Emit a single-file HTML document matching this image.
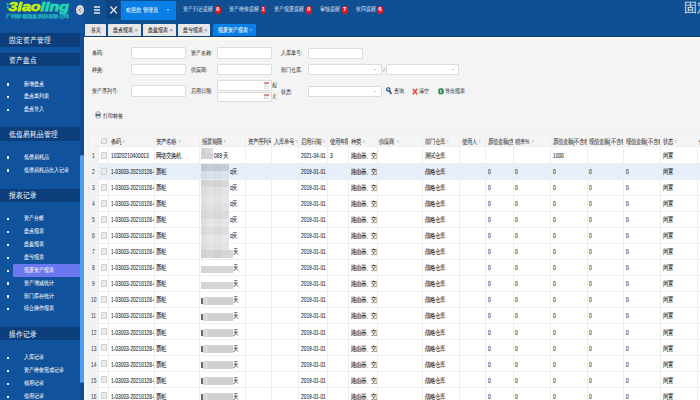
<!DOCTYPE html><html><head><meta charset="utf-8"><style>

*{margin:0;padding:0;box-sizing:border-box}
html,body{width:700px;height:400px;overflow:hidden;background:#f4f4f4;font-family:"Liberation Sans",sans-serif}
body *{-webkit-text-stroke:0.05px currentColor}
.a{position:absolute;white-space:nowrap}
.s{display:inline-block;transform:scaleY(1.2);transform-origin:50% 55%}
.c{display:inline-block;transform:scaleY(1.3);transform-origin:50% 55%}
.d{display:inline-block;transform:scale(0.97,1.45);transform-origin:0 55%}
#hdr{position:absolute;left:84px;top:0;width:616px;height:37px;background:#0f4f92}
#hdrline{position:absolute;left:84px;top:36px;width:616px;height:1px;background:#0c3f7a}
#side{position:absolute;left:0;top:0;width:84px;height:400px;background:#11529c}
.band{position:absolute;left:0;width:80px;height:13.3px;background:#0c3e7c;color:#e8eef6;font-size:6.5px;line-height:13.3px;padding-left:9.3px}
.band .s{position:relative;top:0.9px}
.item{position:absolute;left:0;width:80px;height:13px;color:#eef2f8;-webkit-text-stroke:0.12px #eef2f8;font-size:5px;line-height:13px;padding-left:23.5px}
.item:before{content:"";position:absolute;left:7px;top:5.7px;width:2px;height:2.4px;background:#e6ecf4}
.item.act{background:linear-gradient(to right,transparent 12.8px,#6b77ef 12.8px)}
#content{position:absolute;left:84px;top:37px;width:616px;height:363px;background:#f4f4f4;border-top:1px solid #fff}
#cream{position:absolute;left:84px;top:38px;width:616px;height:1.6px;background:#fcf9ef}
.lbl{position:absolute;font-size:5px;color:#3a3a3a;line-height:8px;transform:scaleY(1.2)}
.inp{position:absolute;background:#fff;border:0.6px solid #dcdcdc;border-radius:1px}
.sel:after{content:"";position:absolute;right:4.6px;top:4.7px;border-left:1.6px solid transparent;border-right:1.6px solid transparent;border-top:1.8px solid #999}
.tab{position:absolute;top:23.7px;height:12px;background:#e8e8e8;color:#222;-webkit-text-stroke:0.1px currentColor;font-size:5px;line-height:12px;text-align:center;border-radius:1px 1px 0 0}
.tab .x{color:#9a9a9a;font-size:6px;position:absolute;right:3px;top:0}
.note{position:absolute;white-space:nowrap;top:6px;color:#c9d6e6;font-size:4.85px;line-height:8px;transform:scaleY(1.2)}
.badge{position:absolute;top:6.2px;width:5.8px;height:7.7px;border-radius:3px;background:#e8151b;color:#fff;font-size:5.5px;line-height:7.7px;text-align:center;font-weight:bold}
table{position:absolute;left:87.6px;top:134.4px;width:672px;border-collapse:collapse;table-layout:fixed;background:#fff}
td,th{border:0.6px solid #eeeeee;font-size:5px;color:#222;-webkit-text-stroke:0.12px #222;font-weight:normal;text-align:left;white-space:nowrap;overflow:hidden;padding:0 0 0 1.6px;height:16.05px}
th{height:12.1px;background:#f5f5f5;color:#3a3a3a}
td.n{background:#f2f2f2;text-align:center;padding:0;color:#444}
tr.hl td{background:#e7effb}
tr.hl td.n{background:#f2f2f2}
.cb{display:inline-block;width:5.4px;height:6.9px;border:0.6px solid #d2d2d2;background:#ebebeb;border-radius:0.6px;vertical-align:middle}
.srt{color:#bbb;font-size:4px}

</style></head><body>
<div id="side"></div><div id="hdr"></div><div id="hdrline"></div>
<svg class="a" style="left:0;top:0" width="76" height="20" viewBox="0 0 76 20">
<defs><linearGradient id="lg" gradientUnits="userSpaceOnUse" x1="8" x2="70" y1="0" y2="0"><stop offset="0" stop-color="#b8ec30"/><stop offset="0.12" stop-color="#c8f010"/><stop offset="0.525" stop-color="#c0ec10"/><stop offset="0.545" stop-color="#28dcb0"/><stop offset="1" stop-color="#20d4b8"/></linearGradient></defs>
<circle cx="7.7" cy="4.2" r="1.1" fill="#22c8c0"/><circle cx="7.7" cy="7.4" r="1.1" fill="#22c8c0"/>
<text x="8.6" y="10.9" font-family="Liberation Sans" font-weight="bold" font-style="italic" font-size="13.4" fill="url(#lg)" stroke="url(#lg)" stroke-width="0.75" textLength="60.3" lengthAdjust="spacingAndGlyphs">3iaoling</text>
<text x="5.8" y="18.2" font-family="Liberation Sans" font-weight="bold" font-size="4.9" fill="#1ea8b8" stroke="#1ea8b8" stroke-width="0.2" textLength="63.5" lengthAdjust="spacingAndGlyphs">广州标领信息科技有限公司</text>
</svg>
<div class="a" style="left:75.9px;top:4.8px;width:8.3px;height:10.6px;border-radius:50%;background:#ddd8d4"></div>
<svg class="a" style="left:76px;top:6px" width="8" height="8" viewBox="0 0 8 8"><path d="M4.7 2.3L3.1 4.1L4.7 5.9" fill="none" stroke="#5c7aa8" stroke-width="1"/></svg>
<div class="a" style="left:93.7px;top:6.2px;width:6.6px;height:1.35px;background:#b0c2da"></div>
<div class="a" style="left:93.7px;top:9.4px;width:6.6px;height:1.35px;background:#b0c2da"></div>
<div class="a" style="left:93.7px;top:12.2px;width:6.6px;height:1.35px;background:#b0c2da"></div>
<div class="a" style="left:106.3px;top:0;width:13.8px;height:19px;background:#0e4480"></div>
<svg class="a" style="left:109.6px;top:6.2px" width="7.5" height="8" viewBox="0 0 7.5 8"><path d="M0.5 0.5L7 7.5M7 0.5L0.5 7.5" stroke="#dfe6ee" stroke-width="1.25"/></svg>
<div class="a" style="left:120.5px;top:0.5px;width:55px;height:19px;background:#0a7fe6"></div>
<div class="a" style="left:126.3px;top:6px;color:#fff;font-size:5px;line-height:8px;transform:scaleY(1.2)">欢迎您 管理员</div>
<div class="a" style="left:167px;top:9.2px;border-left:1.8px solid transparent;border-right:1.8px solid transparent;border-top:2.2px solid #d8eafc"></div>
<div class="note" style="left:182.9px;width:30.5px;letter-spacing:0px">资产归还提醒</div><div class="badge" style="left:214.9px">0</div>
<div class="note" style="left:229.1px;width:29.900000000000006px;letter-spacing:0px">资产维修提醒</div><div class="badge" style="left:260.5px">1</div>
<div class="note" style="left:274.3px;width:30.19999999999999px;letter-spacing:0px">资产报废提醒</div><div class="badge" style="left:306px">0</div>
<div class="note" style="left:319.7px;width:20.80000000000001px;letter-spacing:0px">审核提醒</div><div class="badge" style="left:342px">7</div>
<div class="note" style="left:356.4px;width:19.200000000000045px;letter-spacing:-0.25px">收回提醒</div><div class="badge" style="left:377.1px">6</div>
<div class="a" style="left:684px;top:0.3px;color:#d8e0ea;font-size:13px;line-height:15px">固定资产管理系统</div>
<div class="tab" style="left:85.3px;width:20.6px"><span class="s">首页</span></div>
<div class="tab" style="left:108px;width:33px;text-align:left;padding-left:5px"><span class="s">盘点报表</span> <span class="x">×</span></div>
<div class="tab" style="left:142.9px;width:33px;text-align:left;padding-left:5px"><span class="s">盘盈报表</span> <span class="x">×</span></div>
<div class="tab" style="left:177.8px;width:32.6px;text-align:left;padding-left:5px"><span class="s">盘亏报表</span> <span class="x">×</span></div>
<div class="tab" style="left:212.9px;width:42.8px;text-align:left;padding-left:5px;background:#0a7fe6;color:#fff"><span class="s">报废资产报表</span> <span class="x" style="color:#6fb0f0">×</span></div>
<div class="band" style="top:33.4px"><span class="s">固定资产管理</span></div>
<div class="band" style="top:53.2px"><span class="s">资产盘点</span></div>
<div class="band" style="top:127.3px"><span class="s">低值易耗品管理</span></div>
<div class="band" style="top:188.6px"><span class="s">报表记录</span></div>
<div class="band" style="top:327px"><span class="s">操作记录</span></div>
<div class="item" style="top:77.5px"><span class="s">新增盘点</span></div>
<div class="item" style="top:90.3px"><span class="s">盘点单列表</span></div>
<div class="item" style="top:103.4px"><span class="s">盘点导入</span></div>
<div class="item" style="top:150.8px"><span class="s">低值易耗品</span></div>
<div class="item" style="top:163.8px"><span class="s">低值易耗品出入记录</span></div>
<div class="item" style="top:212.3px"><span class="s">资产台帐</span></div>
<div class="item" style="top:225.1px"><span class="s">盘点报表</span></div>
<div class="item" style="top:238.1px"><span class="s">盘盈报表</span></div>
<div class="item" style="top:250.89999999999998px"><span class="s">盘亏报表</span></div>
<div class="item act" style="top:264.0px"><span class="s">报废资产报表</span></div>
<div class="item" style="top:276.7px"><span class="s">资产增减统计</span></div>
<div class="item" style="top:289.5px"><span class="s">部门库存统计</span></div>
<div class="item" style="top:302.4px"><span class="s">综合操作报表</span></div>
<div class="item" style="top:350.9px"><span class="s">入库记录</span></div>
<div class="item" style="top:363.9px"><span class="s">资产维修完成记录</span></div>
<div class="item" style="top:377.1px"><span class="s">领用记录</span></div>
<div class="item" style="top:389.9px"><span class="s">借用记录</span></div>
<div class="a" style="left:80px;top:33.4px;width:4px;height:367px;background:#0f4c93"></div>
<div class="a" style="left:80.4px;top:155.2px;width:3.4px;height:227.5px;background:#4d9ff2;border-radius:1.7px"></div>
<div id="content"></div><div id="cream"></div>
<div class="lbl" style="left:91.9px;top:49.1px">条码:</div>
<div class="inp" style="left:131.4px;top:47.4px;width:55px;height:11.4px"></div>
<div class="lbl" style="left:190.9px;top:49.1px">资产名称:</div>
<div class="inp" style="left:216.6px;top:47.4px;width:55.4px;height:11.4px"></div>
<div class="lbl" style="left:281.1px;top:49.1px">入库单号:</div>
<div class="inp" style="left:308.2px;top:47.6px;width:55.3px;height:11px"></div>
<div class="lbl" style="left:91.9px;top:65.8px">种类:</div>
<div class="inp" style="left:131.4px;top:63.9px;width:55px;height:11.2px"></div>
<div class="lbl" style="left:190.9px;top:65.8px">供应商:</div>
<div class="inp" style="left:216.6px;top:63.9px;width:55.4px;height:11.2px"></div>
<div class="lbl" style="left:281.1px;top:65.8px">部门仓库:</div>
<div class="inp sel" style="left:308.2px;top:63.5px;width:73.6px;height:11.1px"></div>
<div class="lbl" style="left:383.2px;top:65.5px;color:#777">/</div>
<div class="inp sel" style="left:386.1px;top:63.5px;width:73.3px;height:11.1px"></div>
<div class="lbl" style="left:91.9px;top:86.9px">资产序列号:</div>
<div class="inp" style="left:131.4px;top:85.2px;width:55px;height:11.4px"></div>
<div class="lbl" style="left:190.9px;top:87.2px">启用日期:</div>
<div class="inp" style="left:216.6px;top:79.9px;width:55.4px;height:11px"></div>
<div class="inp" style="left:216.6px;top:91.6px;width:55.4px;height:10.8px"></div>
<svg class="a" style="left:264px;top:82.0px" width="5.4" height="6.8" viewBox="0 0 5.4 6.8"><rect x="0.3" y="0.3" width="4.8" height="6.2" fill="#f6f6f6" stroke="#c8c8c8" stroke-width="0.5"/><rect x="0.3" y="0.3" width="4.8" height="1.5" fill="#e06060"/><path d="M1.6 3L3.6 5.2" stroke="#8a9ab0" stroke-width="0.6"/></svg>
<svg class="a" style="left:264px;top:93.7px" width="5.4" height="6.8" viewBox="0 0 5.4 6.8"><rect x="0.3" y="0.3" width="4.8" height="6.2" fill="#f6f6f6" stroke="#c8c8c8" stroke-width="0.5"/><rect x="0.3" y="0.3" width="4.8" height="1.5" fill="#e06060"/><path d="M1.6 3L3.6 5.2" stroke="#8a9ab0" stroke-width="0.6"/></svg>
<div class="lbl" style="left:271.8px;top:80.6px;font-size:5.4px">起</div>
<div class="lbl" style="left:271.8px;top:92.4px;font-size:5.4px">止</div>
<div class="lbl" style="left:281.1px;top:87.5px">状态:</div>
<div class="inp sel" style="left:308.2px;top:85.6px;width:73.6px;height:11.1px"></div>
<svg class="a" style="left:386.3px;top:87px" width="6" height="7.5" viewBox="0 0 6 7.5"><circle cx="2.3" cy="2.4" r="1.7" fill="#dfe8f4" stroke="#1b4f96" stroke-width="1.1"/><path d="M3.5 3.9L5.4 6.9" stroke="#1b3f70" stroke-width="1.5"/></svg>
<div class="lbl" style="left:393.5px;top:87px">查询</div>
<svg class="a" style="left:412px;top:87.8px" width="6" height="7" viewBox="0 0 6 7"><path d="M0.8 0.8L5.2 6.2M5.2 0.8L0.8 6.2" stroke="#e8504a" stroke-width="1.6"/></svg>
<div class="lbl" style="left:419.2px;top:87px">清空</div>
<svg class="a" style="left:437.8px;top:88.2px" width="6" height="6.6" viewBox="0 0 6 6.6"><rect x="0.3" y="0.3" width="5.4" height="6" rx="1.6" fill="#2e8b4a"/><path d="M3.9 2.2H2.4V4.4H3.9M2.4 3.3H3.6" fill="none" stroke="#e8f4ea" stroke-width="0.7"/></svg>
<div class="lbl" style="left:445px;top:87px">导出报表</div>
<svg class="a" style="left:95.3px;top:110.8px" width="6.2" height="7.8" viewBox="0 0 6.2 7.8"><ellipse cx="3.1" cy="3.9" rx="2.9" ry="3.7" fill="#9aa4b4"/><rect x="1.7" y="1.2" width="2.8" height="1.6" fill="#e4e8ee"/><rect x="1" y="3.2" width="4.2" height="2" fill="#5c6678"/><rect x="1.8" y="5" width="2.6" height="1.7" fill="#e4e8ee"/></svg>
<div class="lbl" style="left:102.9px;top:112px">打印标签</div>
<table><colgroup><col style="width:10.6px"><col style="width:10.1px"><col style="width:45.5px"><col style="width:45.4px"><col style="width:45.9px"><col style="width:26.2px"><col style="width:26.8px"><col style="width:29.4px"><col style="width:21.0px"><col style="width:28.4px"><col style="width:45.2px"><col style="width:37.1px"><col style="width:26.1px"><col style="width:27.5px"><col style="width:37.5px"><col style="width:36.7px"><col style="width:36.6px"><col style="width:36.6px"><col style="width:36.7px"><col style="width:62.7px"></colgroup><tr><th></th><th style="padding-left:2px"><span class="cb"></span></th><th><span class="c">条码</span> <span class="srt">⇕</span></th><th><span class="c">资产名称</span> <span class="srt">⇕</span></th><th><span class="c">报废期限</span> <span class="srt">⇕</span></th><th><span class="c">资产序列号</span></th><th><span class="c">入库单号</span> <span class="srt">⇕</span></th><th><span class="c">启用日期</span> <span class="srt">⇕</span></th><th><span class="c">使用年限</span></th><th><span class="c">种类</span> <span class="srt">⇕</span></th><th><span class="c">供应商</span> <span class="srt">⇕</span></th><th><span class="c">部门仓库</span> <span class="srt">⇕</span></th><th><span class="c">使用人</span> <span class="srt">⇕</span></th><th><span class="c">原值金额</span><span class="d">(</span><span class="c">含税</span><span class="d">)</span></th><th><span class="c">税率</span><span class="d">%</span> <span class="srt">⇕</span></th><th><span class="c">原值金额</span><span class="d">(</span><span class="c">不含税</span><span class="d">)</span></th><th><span class="c">现值金额</span><span class="d">(</span><span class="c">不含税</span><span class="d">)</span></th><th><span class="c">现值金额</span><span class="d">(</span><span class="c">不含税</span><span class="d">)</span></th><th><span class="c">状态</span> <span class="srt">⇕</span></th><th><span class="c">使</span></th></tr><tr><td class="n"><span class="d">1</span></td><td style="padding-left:2px"><span class="cb"></span></td><td><span class="d">10320210400013</span></td><td><span class="c">网络交换机</span></td><td style="padding-left:14.2px"><span class="d">089</span><span class="c">天</span></td><td></td><td></td><td><span class="d">2021-04-01</span></td><td><span class="d">3</span></td><td><span class="c">路由器、交换机</span></td><td></td><td><span class="c">测试仓库</span></td><td></td><td></td><td></td><td><span class="d">1000</span></td><td></td><td></td><td><span class="c">闲置</span></td><td></td></tr><tr class="hl"><td class="n"><span class="d">2</span></td><td style="padding-left:2px"><span class="cb"></span></td><td><span class="d">1-03003-20210128-001</span></td><td><span class="c">票柜</span></td><td style="padding-left:29.4px"><span class="d">d</span><span class="c">天</span></td><td></td><td></td><td><span class="d">2019-01-01</span></td><td></td><td><span class="c">路由器、交换机</span></td><td></td><td><span class="c">战略仓库</span></td><td></td><td><span class="d">0</span></td><td><span class="d">0</span></td><td><span class="d">0</span></td><td><span class="d">0</span></td><td><span class="d">0</span></td><td><span class="c">闲置</span></td><td></td></tr><tr><td class="n"><span class="d">3</span></td><td style="padding-left:2px"><span class="cb"></span></td><td><span class="d">1-03003-20210128-001</span></td><td><span class="c">票柜</span></td><td style="padding-left:29.4px"><span class="d">d</span><span class="c">天</span></td><td></td><td></td><td><span class="d">2019-01-01</span></td><td></td><td><span class="c">路由器、交换机</span></td><td></td><td><span class="c">战略仓库</span></td><td></td><td><span class="d">0</span></td><td><span class="d">0</span></td><td><span class="d">0</span></td><td><span class="d">0</span></td><td><span class="d">0</span></td><td><span class="c">闲置</span></td><td></td></tr><tr><td class="n"><span class="d">4</span></td><td style="padding-left:2px"><span class="cb"></span></td><td><span class="d">1-03003-20210128-001</span></td><td><span class="c">票柜</span></td><td style="padding-left:29.4px"><span class="d">d</span><span class="c">天</span></td><td></td><td></td><td><span class="d">2019-01-01</span></td><td></td><td><span class="c">路由器、交换机</span></td><td></td><td><span class="c">战略仓库</span></td><td></td><td><span class="d">0</span></td><td><span class="d">0</span></td><td><span class="d">0</span></td><td><span class="d">0</span></td><td><span class="d">0</span></td><td><span class="c">闲置</span></td><td></td></tr><tr><td class="n"><span class="d">5</span></td><td style="padding-left:2px"><span class="cb"></span></td><td><span class="d">1-03003-20210128-001</span></td><td><span class="c">票柜</span></td><td style="padding-left:29.4px"><span class="d">d</span><span class="c">天</span></td><td></td><td></td><td><span class="d">2019-01-01</span></td><td></td><td><span class="c">路由器、交换机</span></td><td></td><td><span class="c">战略仓库</span></td><td></td><td><span class="d">0</span></td><td><span class="d">0</span></td><td><span class="d">0</span></td><td><span class="d">0</span></td><td><span class="d">0</span></td><td><span class="c">闲置</span></td><td></td></tr><tr><td class="n"><span class="d">6</span></td><td style="padding-left:2px"><span class="cb"></span></td><td><span class="d">1-03003-20210128-001</span></td><td><span class="c">票柜</span></td><td style="padding-left:29.4px"><span class="d">d</span><span class="c">天</span></td><td></td><td></td><td><span class="d">2019-01-01</span></td><td></td><td><span class="c">路由器、交换机</span></td><td></td><td><span class="c">战略仓库</span></td><td></td><td><span class="d">0</span></td><td><span class="d">0</span></td><td><span class="d">0</span></td><td><span class="d">0</span></td><td><span class="d">0</span></td><td><span class="c">闲置</span></td><td></td></tr><tr><td class="n"><span class="d">7</span></td><td style="padding-left:2px"><span class="cb"></span></td><td><span class="d">1-03003-20210128-001</span></td><td><span class="c">票柜</span></td><td style="padding-left:33.2px"><span class="c">天</span></td><td></td><td></td><td><span class="d">2019-01-01</span></td><td></td><td><span class="c">路由器、交换机</span></td><td></td><td><span class="c">战略仓库</span></td><td></td><td><span class="d">0</span></td><td><span class="d">0</span></td><td><span class="d">0</span></td><td><span class="d">0</span></td><td><span class="d">0</span></td><td><span class="c">闲置</span></td><td></td></tr><tr><td class="n"><span class="d">8</span></td><td style="padding-left:2px"><span class="cb"></span></td><td><span class="d">1-03003-20210128-001</span></td><td><span class="c">票柜</span></td><td style="padding-left:33.2px"><span class="c">天</span></td><td></td><td></td><td><span class="d">2019-01-01</span></td><td></td><td><span class="c">路由器、交换机</span></td><td></td><td><span class="c">战略仓库</span></td><td></td><td><span class="d">0</span></td><td><span class="d">0</span></td><td><span class="d">0</span></td><td><span class="d">0</span></td><td><span class="d">0</span></td><td><span class="c">闲置</span></td><td></td></tr><tr><td class="n"><span class="d">9</span></td><td style="padding-left:2px"><span class="cb"></span></td><td><span class="d">1-03003-20210128-001</span></td><td><span class="c">票柜</span></td><td style="padding-left:33.2px"><span class="c">天</span></td><td></td><td></td><td><span class="d">2019-01-01</span></td><td></td><td><span class="c">路由器、交换机</span></td><td></td><td><span class="c">战略仓库</span></td><td></td><td><span class="d">0</span></td><td><span class="d">0</span></td><td><span class="d">0</span></td><td><span class="d">0</span></td><td><span class="d">0</span></td><td><span class="c">闲置</span></td><td></td></tr><tr><td class="n"><span class="d">10</span></td><td style="padding-left:2px"><span class="cb"></span></td><td><span class="d">1-03003-20210128-001</span></td><td><span class="c">票柜</span></td><td style="padding-left:33.2px"><span class="c">天</span></td><td></td><td></td><td><span class="d">2019-01-01</span></td><td></td><td><span class="c">路由器、交换机</span></td><td></td><td><span class="c">战略仓库</span></td><td></td><td><span class="d">0</span></td><td><span class="d">0</span></td><td><span class="d">0</span></td><td><span class="d">0</span></td><td><span class="d">0</span></td><td><span class="c">闲置</span></td><td></td></tr><tr><td class="n"><span class="d">11</span></td><td style="padding-left:2px"><span class="cb"></span></td><td><span class="d">1-03003-20210128-001</span></td><td><span class="c">票柜</span></td><td style="padding-left:33.2px"><span class="c">天</span></td><td></td><td></td><td><span class="d">2019-01-01</span></td><td></td><td><span class="c">路由器、交换机</span></td><td></td><td><span class="c">战略仓库</span></td><td></td><td><span class="d">0</span></td><td><span class="d">0</span></td><td><span class="d">0</span></td><td><span class="d">0</span></td><td><span class="d">0</span></td><td><span class="c">闲置</span></td><td></td></tr><tr><td class="n"><span class="d">12</span></td><td style="padding-left:2px"><span class="cb"></span></td><td><span class="d">1-03003-20210128-001</span></td><td><span class="c">票柜</span></td><td style="padding-left:33.2px"><span class="c">天</span></td><td></td><td></td><td><span class="d">2019-01-01</span></td><td></td><td><span class="c">路由器、交换机</span></td><td></td><td><span class="c">战略仓库</span></td><td></td><td><span class="d">0</span></td><td><span class="d">0</span></td><td><span class="d">0</span></td><td><span class="d">0</span></td><td><span class="d">0</span></td><td><span class="c">闲置</span></td><td></td></tr><tr><td class="n"><span class="d">13</span></td><td style="padding-left:2px"><span class="cb"></span></td><td><span class="d">1-03003-20210128-001</span></td><td><span class="c">票柜</span></td><td style="padding-left:33.2px"><span class="c">天</span></td><td></td><td></td><td><span class="d">2019-01-01</span></td><td></td><td><span class="c">路由器、交换机</span></td><td></td><td><span class="c">战略仓库</span></td><td></td><td><span class="d">0</span></td><td><span class="d">0</span></td><td><span class="d">0</span></td><td><span class="d">0</span></td><td><span class="d">0</span></td><td><span class="c">闲置</span></td><td></td></tr><tr><td class="n"><span class="d">14</span></td><td style="padding-left:2px"><span class="cb"></span></td><td><span class="d">1-03003-20210128-001</span></td><td><span class="c">票柜</span></td><td style="padding-left:33.2px"><span class="c">天</span></td><td></td><td></td><td><span class="d">2019-01-01</span></td><td></td><td><span class="c">路由器、交换机</span></td><td></td><td><span class="c">战略仓库</span></td><td></td><td><span class="d">0</span></td><td><span class="d">0</span></td><td><span class="d">0</span></td><td><span class="d">0</span></td><td><span class="d">0</span></td><td><span class="c">闲置</span></td><td></td></tr><tr><td class="n"><span class="d">15</span></td><td style="padding-left:2px"><span class="cb"></span></td><td><span class="d">1-03003-20210128-001</span></td><td><span class="c">票柜</span></td><td style="padding-left:33.2px"><span class="c">天</span></td><td></td><td></td><td><span class="d">2019-01-01</span></td><td></td><td><span class="c">路由器、交换机</span></td><td></td><td><span class="c">战略仓库</span></td><td></td><td><span class="d">0</span></td><td><span class="d">0</span></td><td><span class="d">0</span></td><td><span class="d">0</span></td><td><span class="d">0</span></td><td><span class="c">闲置</span></td><td></td></tr><tr><td class="n"><span class="d">16</span></td><td style="padding-left:2px"><span class="cb"></span></td><td><span class="d">1-03003-20210128-001</span></td><td><span class="c">票柜</span></td><td style="padding-left:33.2px"><span class="c">天</span></td><td></td><td></td><td><span class="d">2019-01-01</span></td><td></td><td><span class="c">路由器、交换机</span></td><td></td><td><span class="c">战略仓库</span></td><td></td><td><span class="d">0</span></td><td><span class="d">0</span></td><td><span class="d">0</span></td><td><span class="d">0</span></td><td><span class="d">0</span></td><td><span class="c">闲置</span></td><td></td></tr></table>
<div class="a" style="left:201px;top:147.5px;width:11.5px;height:11.2px;background:#d3d1d6"></div>
<div class="a" style="left:206px;top:147.5px;width:6.5px;height:5px;background:#dcdade"></div>
<div class="a" style="left:201px;top:163.6px;width:28px;height:7.6px;background:#c8ccd8"></div>
<div class="a" style="left:201px;top:171.2px;width:28px;height:7.6px;background:#dde3ee"></div>
<div class="a" style="left:201px;top:179.6px;width:28px;height:7.4px;background:#d8d8da"></div>
<div class="a" style="left:201px;top:187px;width:28px;height:8px;background:#e3e3e5"></div>
<div class="a" style="left:201px;top:195px;width:28px;height:8px;background:#e7e7e9"></div>
<div class="a" style="left:201px;top:203px;width:28px;height:8px;background:#e2e2e4"></div>
<div class="a" style="left:201px;top:211px;width:28px;height:8px;background:#dcdcde"></div>
<div class="a" style="left:201px;top:219px;width:28px;height:8px;background:#e6e6e8"></div>
<div class="a" style="left:201px;top:227px;width:28px;height:8px;background:#dfdfe1"></div>
<div class="a" style="left:201px;top:235px;width:28px;height:8px;background:#e8e8ea"></div>
<div class="a" style="left:201px;top:243px;width:28px;height:7px;background:#e4e4e6"></div>
<div class="a" style="left:201px;top:250px;width:31.5px;height:8px;background:#d6d5d8"></div>
<div class="a" style="left:201px;top:265.6px;width:31.5px;height:7.6px;background:#d5d4d7"></div>
<div class="a" style="left:201px;top:281.6px;width:31.5px;height:7.6px;background:#d5d4d7"></div>
<div class="a" style="left:203px;top:297.0px;width:29.5px;height:7.6px;background:#d0d0d2"></div>
<div class="a" style="left:203px;top:297.0px;width:5px;height:7.6px;background:#d8d8da"></div>
<div class="a" style="left:201px;top:298.0px;width:1.8px;height:5.6px;background:#6a6a6a"></div>
<div class="a" style="left:203px;top:313.05px;width:29.5px;height:7.6px;background:#d0d0d2"></div>
<div class="a" style="left:203px;top:313.05px;width:5px;height:7.6px;background:#d8d8da"></div>
<div class="a" style="left:201px;top:314.05px;width:1.8px;height:5.6px;background:#6a6a6a"></div>
<div class="a" style="left:203px;top:329.1px;width:29.5px;height:7.6px;background:#d0d0d2"></div>
<div class="a" style="left:203px;top:329.1px;width:5px;height:7.6px;background:#d8d8da"></div>
<div class="a" style="left:201px;top:330.1px;width:1.8px;height:5.6px;background:#6a6a6a"></div>
<div class="a" style="left:203px;top:345.15px;width:29.5px;height:7.6px;background:#d0d0d2"></div>
<div class="a" style="left:203px;top:345.15px;width:5px;height:7.6px;background:#d8d8da"></div>
<div class="a" style="left:201px;top:346.15px;width:1.8px;height:5.6px;background:#6a6a6a"></div>
<div class="a" style="left:203px;top:361.2px;width:29.5px;height:7.6px;background:#d0d0d2"></div>
<div class="a" style="left:203px;top:361.2px;width:5px;height:7.6px;background:#d8d8da"></div>
<div class="a" style="left:201px;top:362.2px;width:1.8px;height:5.6px;background:#6a6a6a"></div>
<div class="a" style="left:203px;top:377.25px;width:29.5px;height:7.6px;background:#d0d0d2"></div>
<div class="a" style="left:203px;top:377.25px;width:5px;height:7.6px;background:#d8d8da"></div>
<div class="a" style="left:201px;top:378.25px;width:1.8px;height:5.6px;background:#6a6a6a"></div>
<div class="a" style="left:203px;top:393.3px;width:29.5px;height:7.6px;background:#d0d0d2"></div>
<div class="a" style="left:203px;top:393.3px;width:5px;height:7.6px;background:#d8d8da"></div>
<div class="a" style="left:201px;top:394.3px;width:1.8px;height:5.6px;background:#6a6a6a"></div>
<div class="a" style="left:201px;top:163.6px;width:5.5px;height:95px;background:rgba(0,0,0,0.025)"></div><div class="a" style="left:213px;top:163.6px;width:8px;height:95px;background:rgba(0,0,0,0.02)"></div>
</body></html>
